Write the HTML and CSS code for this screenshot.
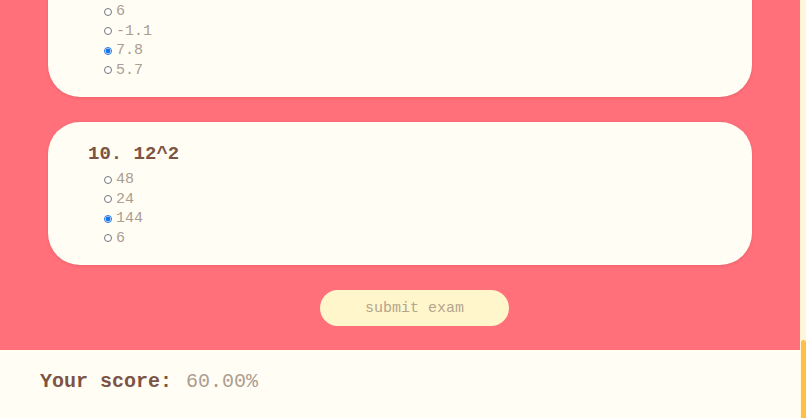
FILE: index.html
```html
<!DOCTYPE html>
<html lang="en">
<head>
<meta charset="utf-8">
<title>Math Exam</title>
<link rel="stylesheet" href="styles.css">
</head>
<body>
<div class="page">
  <main class="exam">
    <section class="card">
      <h2 class="q-title">9. 2.6*3</h2>
      <div class="options">
        <label class="opt"><input type="radio" name="q9">6</label>
        <label class="opt"><input type="radio" name="q9">-1.1</label>
        <label class="opt"><input type="radio" name="q9" checked>7.8</label>
        <label class="opt"><input type="radio" name="q9">5.7</label>
      </div>
    </section>

    <section class="card">
      <h2 class="q-title">10. 12^2</h2>
      <div class="options">
        <label class="opt"><input type="radio" name="q10">48</label>
        <label class="opt"><input type="radio" name="q10">24</label>
        <label class="opt"><input type="radio" name="q10" checked>144</label>
        <label class="opt"><input type="radio" name="q10">6</label>
      </div>
    </section>

    <div class="actions">
      <button class="submit" type="button">submit exam</button>
    </div>
  </main>

  <footer class="score">
    <span class="score-label">Your score:</span>
    <span class="score-value">60.00%</span>
  </footer>
</div>
<aside class="scrollbar"><div class="scrollbar-thumb"></div></aside>
<script src="script.js"></script>
</body>
</html>
```

FILE: styles.css
```css
html {
  background: #fffdf4;
}

body {
  margin: 0;
  font-family: "Liberation Mono", "Courier New", monospace;
  background: #fffdf4;
}

.page {
  margin-right: 6px;
}

.exam {
  background: #ff707a;
  padding: 25px 48px 24px;
  display: flex;
  flex-direction: column;
  gap: 25px;
}

.card {
  background: #fffdf4;
  border-radius: 32px;
  padding: 20px 40px 17px;
  box-shadow: 0 1px 3px rgba(150, 40, 50, 0.18);
}

.q-title {
  margin: 0 0 4px;
  font-size: 19px;
  line-height: 24px;
  font-weight: bold;
  color: #7d5443;
}

.options {
  display: flex;
  flex-direction: column;
  padding-left: 16px;
}

.opt {
  display: flex;
  align-items: center;
  height: 19.5px;
  font-size: 15px;
  color: #ab9d91;
}

.opt input {
  width: 8px;
  height: 8px;
  margin: 0 4px 0 0;
  accent-color: #1a73e8;
}

.actions {
  display: flex;
  justify-content: center;
  padding-left: 29px;
}

.submit {
  width: 189px;
  height: 36px;
  border: none;
  border-radius: 18px;
  background: #fff6cc;
  font-family: "Liberation Mono", "Courier New", monospace;
  font-size: 15px;
  color: #b5a58d;
}

.score {
  padding: 20px 40px 24px;
  line-height: 24px;
  font-size: 20px;
}

.score-label {
  font-weight: bold;
  color: #7d5443;
}

.score-value {
  color: #ab9d91;
  margin-left: 2px;
}

.scrollbar {
  position: fixed;
  top: 0;
  right: 0;
  width: 6px;
  height: 100%;
  background: #fff7d8;
}

.scrollbar-thumb {
  position: absolute;
  left: 1px;
  right: 0;
  bottom: 0;
  height: 78px;
  background: #ffbd4a;
  border-radius: 3px 3px 0 0;
}
```

FILE: script.js
```js
function toBottom() {
  window.scrollTo(0, document.documentElement.scrollHeight);
}
toBottom();
window.addEventListener('load', toBottom);
```
